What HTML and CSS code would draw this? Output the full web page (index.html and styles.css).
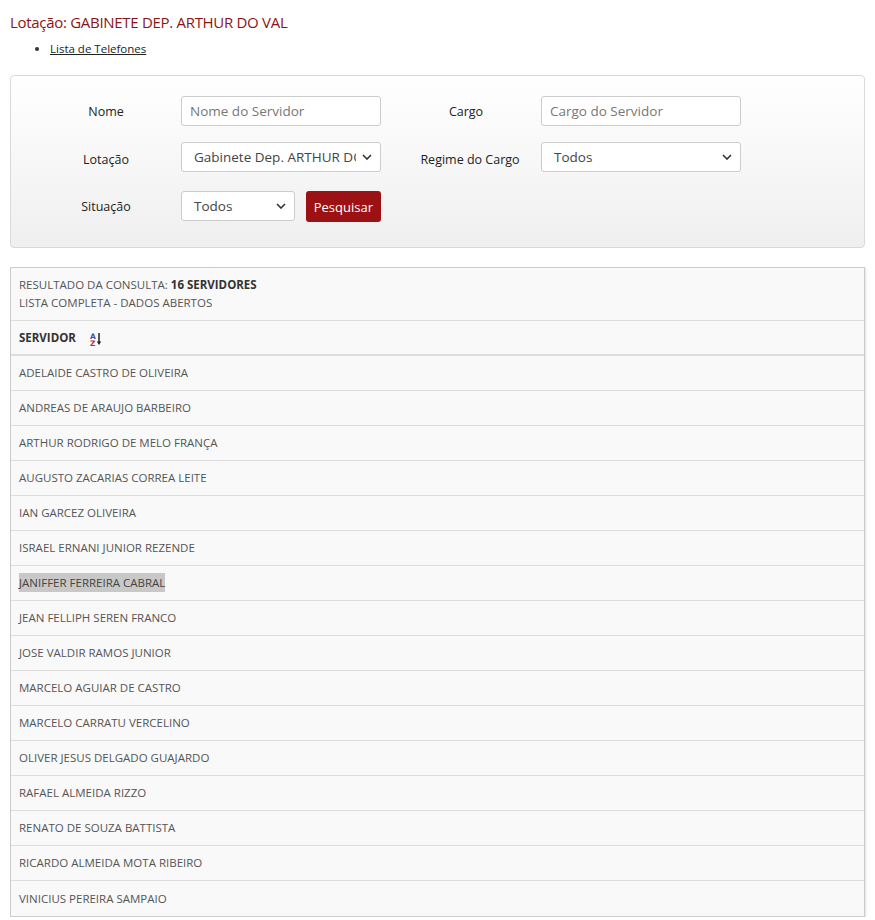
FILE: index.html
```html
<!DOCTYPE html>
<html lang="pt-BR">
<head>
<meta charset="utf-8">
<title>Lotação</title>
<link rel="stylesheet" href="styles.css">
</head>
<body>
<h1 class="title">Lotação: GABINETE DEP. ARTHUR DO VAL</h1>
<ul class="links">
  <li><a href="#">Lista de Telefones</a></li>
</ul>

<form class="filter">
  <div class="grid">
    <label class="lbl">Nome</label>
    <input class="ctl" type="text" placeholder="Nome do Servidor">
    <label class="lbl lbl-r">Cargo</label>
    <input class="ctl" type="text" placeholder="Cargo do Servidor">

    <label class="lbl lbl-low">Lotação</label>
    <div class="sel"><span>Gabinete Dep. ARTHUR DO VAL</span><svg class="chev" viewBox="0 0 10 6"><path d="M1 1l4 4 4-4" fill="none" stroke="#333" stroke-width="1.6"/></svg></div>
    <label class="lbl lbl-r lbl-low lbl-regime">Regime do Cargo</label>
    <div class="sel"><span>Todos</span><svg class="chev" viewBox="0 0 10 6"><path d="M1 1l4 4 4-4" fill="none" stroke="#333" stroke-width="1.6"/></svg></div>

    <label class="lbl lbl-sit">Situação</label>
    <div class="actions">
      <div class="sel sel-sm"><span>Todos</span><svg class="chev" viewBox="0 0 10 6"><path d="M1 1l4 4 4-4" fill="none" stroke="#333" stroke-width="1.6"/></svg></div>
      <button type="button" class="btn">Pesquisar</button>
    </div>
  </div>
</form>

<div class="result">
  <div class="res-head">
    <div>RESULTADO DA CONSULTA: <b>16 SERVIDORES</b></div>
    <div>LISTA COMPLETA - DADOS ABERTOS</div>
  </div>
  <div class="col-head">SERVIDOR
    <svg class="sort" viewBox="0 0 12 14" width="12" height="14">
      <text x="0" y="6.5" font-size="7.5" font-family="DejaVu Sans" font-weight="bold" fill="#3b4fa8">A</text>
      <text x="0" y="13.5" font-size="7.5" font-family="DejaVu Sans" font-weight="bold" fill="#c0303a">Z</text>
      <path d="M9 1v9" stroke="#222" stroke-width="1.5"/>
      <path d="M6.8 9.5h4.4l-2.2 3.5z" fill="#222"/>
    </svg>
  </div>
  <div class="row">ADELAIDE CASTRO DE OLIVEIRA</div>
  <div class="row">ANDREAS DE ARAUJO BARBEIRO</div>
  <div class="row">ARTHUR RODRIGO DE MELO FRANÇA</div>
  <div class="row">AUGUSTO ZACARIAS CORREA LEITE</div>
  <div class="row">IAN GARCEZ OLIVEIRA</div>
  <div class="row">ISRAEL ERNANI JUNIOR REZENDE</div>
  <div class="row"><span class="hl">JANIFFER FERREIRA CABRAL</span></div>
  <div class="row">JEAN FELLIPH SEREN FRANCO</div>
  <div class="row">JOSE VALDIR RAMOS JUNIOR</div>
  <div class="row">MARCELO AGUIAR DE CASTRO</div>
  <div class="row">MARCELO CARRATU VERCELINO</div>
  <div class="row">OLIVER JESUS DELGADO GUAJARDO</div>
  <div class="row">RAFAEL ALMEIDA RIZZO</div>
  <div class="row">RENATO DE SOUZA BATTISTA</div>
  <div class="row">RICARDO ALMEIDA MOTA RIBEIRO</div>
  <div class="row">VINICIUS PEREIRA SAMPAIO</div>
</div>
</body>
</html>
```

FILE: styles.css
```css
* { box-sizing: border-box; }
body {
  margin: 0;
  padding: 0 10px;
  font-family: "Open Sans", "Noto Sans", sans-serif;
  color: #333;
  background: #fff;
}
.title {
  margin: 0;
  padding-top: 11px;
  font-size: 15px;
  font-weight: 400;
  line-height: 22px;
  color: #8b1414;
  letter-spacing: -0.3px;
}
.links {
  margin: 7px 0 0;
  padding-left: 40px;
  font-size: 11.5px;
  line-height: 18px;
}
.links a { color: #222; text-decoration: underline; }

.filter {
  margin-top: 17px;
  height: 173px;
  border: 1px solid #d9d9d9;
  border-radius: 4px;
  background: linear-gradient(#ffffff, #efefef);
  padding: 20px 0 0 20px;
}
.grid {
  display: grid;
  grid-template-columns: 150px 200px 160px 200px;
  grid-template-rows: 30px 30px 31px;
  row-gap: 16px;
  align-items: center;
}
.lbl {
  text-align: center;
  font-size: 12.5px;
  color: #222;
}
.lbl-r { padding-left: 10px; }
.lbl-regime { padding-left: 18px; }
.lbl-low { position: relative; top: 2px; }
.lbl-sit { position: relative; top: 3px; }
.ctl, .sel {
  height: 30px;
  width: 200px;
  border: 1px solid #ccc;
  border-radius: 3px;
  background: #fff;
  font-family: inherit;
  font-size: 13.5px;
  color: #555;
  padding: 0 8px;
}
.ctl::placeholder { color: #777; }
.sel {
  display: flex;
  align-items: center;
  padding: 0 8px 0 12px;
  color: #444;
}
.sel span {
  flex: 1;
  white-space: nowrap;
  overflow: hidden;
  text-overflow: clip;
  margin-right: 6px;
}
.chev { width: 10px; height: 6px; flex: none; }
.actions {
  display: flex;
  align-items: center;
  gap: 11px;
  margin-top: 4px;
}
.sel-sm { width: 114px; }
.btn {
  height: 31px;
  padding: 0 8px;
  background: #9b1114;
  color: #fff;
  border: 0;
  border-radius: 3px;
  font-family: inherit;
  font-size: 13px;
  position: relative;
  top: 1px;
}

.result {
  margin-top: 19px;
  border: 1px solid #ccc;
  background: #f9f9f9;
  box-shadow: 1px 1px 2px rgba(0,0,0,0.12);
  font-size: 11.5px;
  color: #555;
}
.res-head {
  padding: 8px 8px 8px;
  line-height: 18px;
  border-bottom: 1px solid #ddd;
}
.res-head b { color: #333; font-weight: 700; }
.col-head {
  height: 35px;
  padding: 0 8px;
  display: flex;
  align-items: center;
  font-weight: 700;
  color: #333;
  border-bottom: 2px solid #ddd;
}
.sort { margin-left: 14px; margin-top: 3px; }
.row {
  height: 35px;
  padding: 0 8px 1px;
  display: flex;
  align-items: center;
  border-bottom: 1px solid #ddd;
}
.row:last-child { border-bottom: 0; }
.hl { background: #c8c8c8; color: #444; padding: 2px 0; }
```
